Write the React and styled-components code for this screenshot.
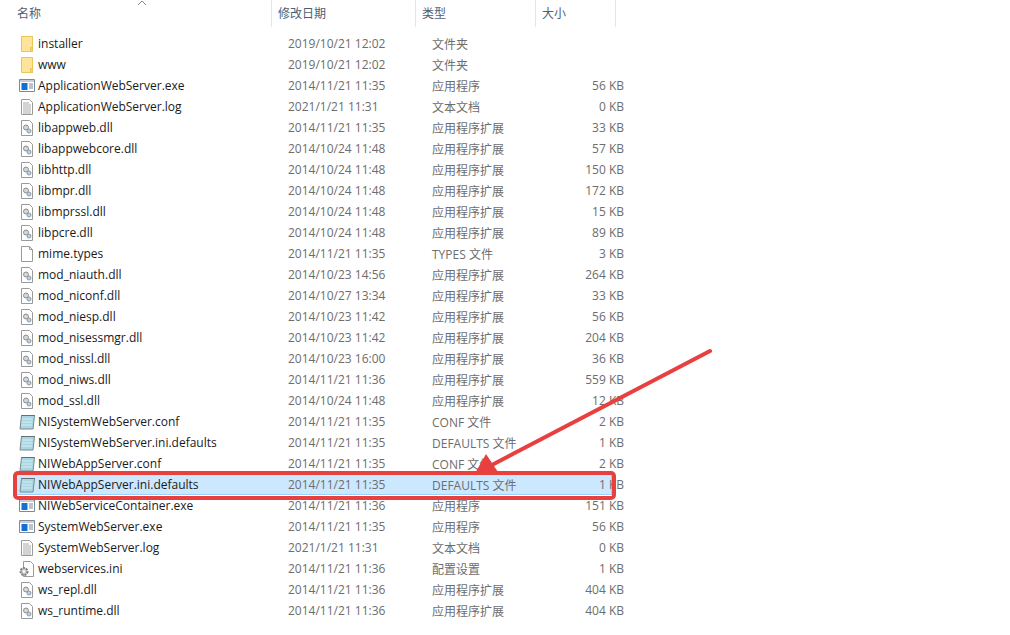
import React from 'react'
import styled, { createGlobalStyle } from 'styled-components'

const GlobalStyle = createGlobalStyle`
  html, body {
    margin: 0;
    padding: 0;
    background: #fff;
  }
`

const files = [
  ['installer', 'folder', '2019/10/21 12:02', '文件夹', ''],
  ['www', 'folder', '2019/10/21 12:02', '文件夹', ''],
  ['ApplicationWebServer.exe', 'exe', '2014/11/21 11:35', '应用程序', '56 KB'],
  ['ApplicationWebServer.log', 'log', '2021/1/21 11:31', '文本文档', '0 KB'],
  ['libappweb.dll', 'dll', '2014/11/21 11:35', '应用程序扩展', '33 KB'],
  ['libappwebcore.dll', 'dll', '2014/10/24 11:48', '应用程序扩展', '57 KB'],
  ['libhttp.dll', 'dll', '2014/10/24 11:48', '应用程序扩展', '150 KB'],
  ['libmpr.dll', 'dll', '2014/10/24 11:48', '应用程序扩展', '172 KB'],
  ['libmprssl.dll', 'dll', '2014/10/24 11:48', '应用程序扩展', '15 KB'],
  ['libpcre.dll', 'dll', '2014/10/24 11:48', '应用程序扩展', '89 KB'],
  ['mime.types', 'blank', '2014/11/21 11:35', 'TYPES 文件', '3 KB'],
  ['mod_niauth.dll', 'dll', '2014/10/23 14:56', '应用程序扩展', '264 KB'],
  ['mod_niconf.dll', 'dll', '2014/10/27 13:34', '应用程序扩展', '33 KB'],
  ['mod_niesp.dll', 'dll', '2014/10/23 11:42', '应用程序扩展', '56 KB'],
  ['mod_nisessmgr.dll', 'dll', '2014/10/23 11:42', '应用程序扩展', '204 KB'],
  ['mod_nissl.dll', 'dll', '2014/10/23 16:00', '应用程序扩展', '36 KB'],
  ['mod_niws.dll', 'dll', '2014/11/21 11:36', '应用程序扩展', '559 KB'],
  ['mod_ssl.dll', 'dll', '2014/10/24 11:48', '应用程序扩展', '12 KB'],
  ['NISystemWebServer.conf', 'conf', '2014/11/21 11:35', 'CONF 文件', '2 KB'],
  ['NISystemWebServer.ini.defaults', 'conf', '2014/11/21 11:35', 'DEFAULTS 文件', '1 KB'],
  ['NIWebAppServer.conf', 'conf', '2014/11/21 11:35', 'CONF 文件', '2 KB'],
  ['NIWebAppServer.ini.defaults', 'conf', '2014/11/21 11:35', 'DEFAULTS 文件', '1 KB', true],
  ['NIWebServiceContainer.exe', 'exe', '2014/11/21 11:36', '应用程序', '151 KB'],
  ['SystemWebServer.exe', 'exe', '2014/11/21 11:35', '应用程序', '56 KB'],
  ['SystemWebServer.log', 'log', '2021/1/21 11:31', '文本文档', '0 KB'],
  ['webservices.ini', 'ini', '2014/11/21 11:36', '配置设置', '1 KB'],
  ['ws_repl.dll', 'dll', '2014/11/21 11:36', '应用程序扩展', '404 KB'],
  ['ws_runtime.dll', 'dll', '2014/11/21 11:36', '应用程序扩展', '404 KB'],
]

const Page = styled.div`
  position: relative;
  width: 1010px;
  height: 635px;
  overflow: hidden;
  background: #fff;
  font-family: "Open Sans", "Noto Sans CJK SC", sans-serif;
  font-size: 12px;
`
const Header = styled.div`
  display: grid;
  grid-template-columns: 272px 144px 120px 80px;
  height: 27px;
  margin-bottom: 6px;
`
const HeaderCell = styled.div`
  position: relative;
  padding-left: ${p => p.$first ? '17px' : '6px'};
  border-right: 1px solid #e5e5e5;
  line-height: 27px;
  color: #4c607a;
  box-sizing: border-box;
`
const SortArrow = styled.svg`
  position: absolute;
  left: 137px;
  top: 0;
`
const Row = styled.div`
  display: grid;
  grid-template-columns: 16px 22px 234px 144px 120px 72px;
  align-items: center;
  width: 596px;
  height: 21px;
  margin-left: 16px;
  padding-left: 0;
  background: ${p => p.$selected ? '#cce8ff' : 'transparent'};
  box-shadow: ${p => p.$selected ? 'inset 0 0 0 1px #99d1ff' : 'none'};
  white-space: nowrap;
`
const IconSlot = styled.div`
  display: flex;
  justify-content: center;
  grid-column: 1 / span 1;
  margin-left: 2px;
  width: 18px;
`
const Name = styled.div`
  grid-column: 2 / span 2;
  padding-left: 4px;
  margin-left: 18px;
  margin-left: 0;
  padding-left: 6px;
  color: #1a1a1a;
`
const Cell = styled.div`
  padding-left: 0;
  color: #6d6d6d;
`
const Size = styled(Cell)`
  text-align: right;
`
const Mark = styled.div`
  position: absolute;
  left: 13px;
  top: 471px;
  width: 603px;
  height: 29px;
  box-sizing: border-box;
  border: 4px solid #e8403f;
  border-radius: 5px;
`
const Arrow = styled.svg`
  position: absolute;
  left: 0;
  top: 0;
  pointer-events: none;
`

function FileIcon({ kind }) {
  if (kind === 'folder') {
    return (
      <svg width="16" height="16" viewBox="0 0 16 16">
        <path d="M2.5 .5h11v15h-11z" fill="#fde49a" stroke="#e9c65b" />
        <path d="M11.5 15.5v-4h2v4z" fill="#f5d36f" stroke="#e9c65b" />
      </svg>
    )
  }
  if (kind === 'exe') {
    return (
      <svg width="18" height="16" viewBox="0 0 18 16">
        <path d="M1.5 1.5h15v12h-15z" fill="#fff" stroke="#7d8a99" />
        <path d="M2 2h14v2h-14z" fill="#c9ced6" />
        <path d="M3.500 5h6v7h-6z" fill="#1470d0" />
        <path d="M11 6h4M11 8h4M11 10h4" stroke="#7a8694" />
      </svg>
    )
  }
  if (kind === 'log') {
    return (
      <svg width="16" height="16" viewBox="0 0 16 16">
        <path d="M2.500 .5h8l3 3v12h-11z" fill="#fff" stroke="#9a9a9a" />
        <path d="M4 4h6M4 6h8M4 8h8M4 10h8M4 12h8M4 14h8" stroke="#a8a8a8" />
      </svg>
    )
  }
  if (kind === 'blank') {
    return (
      <svg width="16" height="16" viewBox="0 0 16 16">
        <path d="M2.500 .5h8l3 3v12h-11z" fill="#fff" stroke="#9a9a9a" />
        <path d="M10.500 .5v3h3" fill="none" stroke="#9a9a9a" />
      </svg>
    )
  }
  if (kind === 'dll') {
    return (
      <svg width="16" height="16" viewBox="0 0 16 16">
        <path d="M2.500 .5h8l3 3v12h-11z" fill="#fff" stroke="#9a9a9a" />
        <circle cx="7" cy="7.500" r="2.500" fill="#d6d6d6" stroke="#8d8d8d" />
        <circle cx="10" cy="11" r="2" fill="#bcd3e6" stroke="#8d9aa6" />
      </svg>
    )
  }
  if (kind === 'conf') {
    return (
      <svg width="18" height="16" viewBox="0 0 18 16">
        <path d="M3.500 1.500h13l-1.500 13.500h-13z" fill="#a9d6e3" stroke="#7a8a8c" />
        <path d="M3.500 1.500h13" stroke="#555" strokeDasharray="1 1" />
        <path d="M4 5h10.500M3.700 8h10.500M3.400 11h10.500" stroke="#d6edf3" />
      </svg>
    )
  }
  return (
    <svg width="18" height="16" viewBox="0 0 18 16">
      <path d="M5.500 .5h7l3 3v12h-10z" fill="#fff" stroke="#9a9a9a" />
      <circle cx="6" cy="10.500" r="3.500" fill="#c9c9c9" stroke="#7f7f7f" strokeWidth="2" strokeDasharray="2 1" />
      <circle cx="6" cy="10.500" r="1.200" fill="#fff" />
    </svg>
  )
}

export default function App() {
  return (
    <Page>
      <GlobalStyle />
      <Header>
        <HeaderCell $first>
          名称
          <SortArrow width="10" height="6" viewBox="0 0 10 6">
            <path d="M1 5l4-4 4 4" fill="none" stroke="#8a8a8a" />
          </SortArrow>
        </HeaderCell>
        <HeaderCell>修改日期</HeaderCell>
        <HeaderCell>类型</HeaderCell>
        <HeaderCell>大小</HeaderCell>
      </Header>
      {files.map(([name, kind, date, type, size, selected]) => (
        <Row key={name} $selected={selected}>
          <IconSlot><FileIcon kind={kind} /></IconSlot>
          <Name>{name}</Name>
          <Cell>{date}</Cell>
          <Cell>{type}</Cell>
          <Size>{size}</Size>
        </Row>
      ))}
      <Mark />
      <Arrow width="1010" height="635" viewBox="0 0 1010 635">
        <path d="M710 351L490 466" stroke="#e8403f" strokeWidth="4" strokeLinecap="round" />
        <path d="M474 475L486 454L498 472z" fill="#e8403f" />
      </Arrow>
    </Page>
  )
}
